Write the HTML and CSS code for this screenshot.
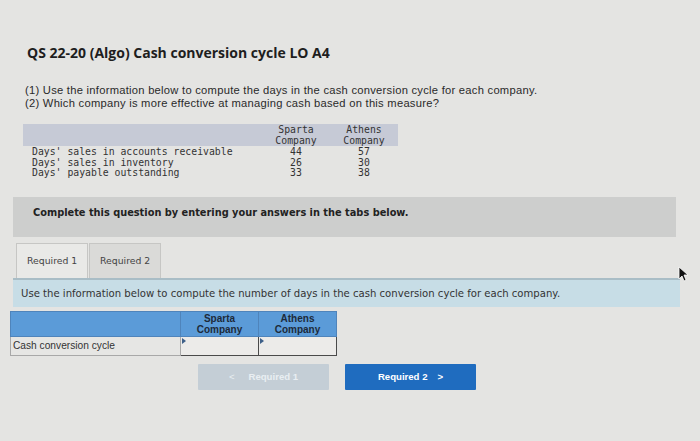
FILE: index.html
```html
<!DOCTYPE html>
<html lang="en">
<head>
<meta charset="utf-8">
<title>QS 22-20 (Algo) Cash conversion cycle LO A4</title>
<link rel="stylesheet" href="styles.css">
</head>
<body>
<div class="page">
  <h1 class="title">QS 22-20 (Algo) Cash conversion cycle LO A4</h1>
  <div class="intro">
    <p>(1) Use the information below to compute the days in the cash conversion cycle for each company.</p>
    <p>(2) Which company is more effective at managing cash based on this measure?</p>
  </div>

  <table class="data">
    <thead>
      <tr>
        <th class="lbl"></th>
        <th>Sparta<br>Company</th>
        <th>Athens<br>Company</th>
      </tr>
    </thead>
    <tbody>
      <tr class="first"><td class="lbl">Days' sales in accounts receivable</td><td>44</td><td>57</td></tr>
      <tr><td class="lbl">Days' sales in inventory</td><td>26</td><td>30</td></tr>
      <tr><td class="lbl">Days' payable outstanding</td><td>33</td><td>38</td></tr>
    </tbody>
  </table>

  <div class="banner">Complete this question by entering your answers in the tabs below.</div>

  <div class="tabs">
    <div class="tab active">Required 1</div>
    <div class="tab">Required 2</div>
  </div>
  <div class="note">Use the information below to compute the number of days in the cash conversion cycle for each company.</div>

  <table class="answer">
    <thead>
      <tr>
        <th class="blank"></th>
        <th>Sparta<br>Company</th>
        <th>Athens<br>Company</th>
      </tr>
    </thead>
    <tbody>
      <tr>
        <td class="rowlbl">Cash conversion cycle</td>
        <td class="inp"><span class="flag"></span></td>
        <td class="inp"><span class="flag"></span></td>
      </tr>
    </tbody>
  </table>

  <div class="nav">
    <button class="btn prev" disabled><span class="chev">&lt;</span>Required 1</button>
    <button class="btn next">Required 2<span class="chev">&gt;</span></button>
  </div>

  <svg class="cursor" width="10" height="16" viewBox="0 0 10 16" aria-hidden="true">
    <path d="M1 1 L1 13 L4 10 L6 15 L8 14 L6 9 L10 9 Z" fill="#111" stroke="#fff" stroke-width="0.8"/>
  </svg>
</div>
</body>
</html>
```

FILE: styles.css
```css
html, body {
  margin: 0;
  padding: 0;
}
body {
  background: #e4e4e2;
  width: 700px;
  height: 441px;
  overflow: hidden;
}
.page {
  position: relative;
  padding-top: 45px;
  height: 396px;
}
.title {
  margin: 0 0 0 27px;
  font-family: "Open Sans", "Liberation Sans", sans-serif;
  font-weight: 700;
  font-size: 14px;
  line-height: 16px;
  color: #1e1e1e;
}
.intro {
  margin: 23px 0 0 25px;
  font-family: "Liberation Sans", Arial, sans-serif;
  font-size: 11.2px;
  line-height: 12.6px;
  letter-spacing: 0.26px;
  color: #2a2a2a;
}
.intro p {
  margin: 0;
}
.data {
  margin: 15px 0 0 23px;
  width: 375px;
  border-collapse: collapse;
  font-family: "DejaVu Sans Mono", "Liberation Mono", monospace;
  font-size: 9.8px;
  color: #333;
}
.data th, .data td {
  padding: 0;
  font-weight: 400;
  text-align: center;
  width: 68px;
}
.data thead tr {
  background: #c6cad6;
}
.data th {
  line-height: 11px;
  height: 22px;
  vertical-align: bottom;
}
.data td {
  line-height: 10.6px;
}
.data tr.first td {
  padding-top: 1px;
}
.data .lbl {
  width: auto;
  text-align: left;
  padding-left: 9px;
}
.banner {
  margin: 18px 0 0 13px;
  width: 643px;
  height: 30px;
  padding: 10px 0 0 20px;
  background: #cdcecd;
  font-family: "DejaVu Sans", Verdana, sans-serif;
  font-weight: 700;
  font-size: 9.8px;
  line-height: 12px;
  color: #222;
}
.tabs {
  display: flex;
  margin: 6px 0 0 16px;
  gap: 1px;
}
.tab {
  width: 72px;
  height: 35px;
  box-sizing: border-box;
  border: 1px solid #c6c6c4;
  border-bottom: none;
  background: #dadad8;
  font-family: "DejaVu Sans", Verdana, sans-serif;
  font-size: 9.3px;
  line-height: 33px;
  color: #444;
  padding-left: 10px;
}
.tab.active {
  background: #e9e9e7;
}
.note {
  margin-left: 13px;
  width: 659px;
  height: 27px;
  padding-left: 8px;
  border-top: 2px solid #a9bdc6;
  background: #c7dde6;
  font-family: "DejaVu Sans", Verdana, sans-serif;
  font-size: 10.1px;
  line-height: 27px;
  color: #333;
}
.answer {
  margin: 4px 0 0 10px;
  border-collapse: collapse;
  font-family: "Liberation Sans", Arial, sans-serif;
  font-size: 10px;
}
.answer th {
  background: #5b9bd8;
  border: 1px solid #4f84bb;
  height: 24px;
  padding: 0;
  width: 77px;
  font-weight: 700;
  line-height: 11px;
  color: #1d2a3a;
  vertical-align: middle;
}
.answer th.blank {
  width: 169px;
}
.answer td {
  height: 18px;
  padding: 0;
}
.answer .rowlbl {
  background: #e6e6e4;
  border: 1px solid #a8a8a8;
  padding-left: 2px;
  color: #333;
  font-size: 10.2px;
}
.answer .inp {
  position: relative;
  background: #ecebe9;
  border: 1.5px solid #4a4a4a;
}
.flag {
  position: absolute;
  left: 1px;
  top: 1px;
  width: 0;
  height: 0;
  border-top: 3px solid transparent;
  border-bottom: 3px solid transparent;
  border-left: 4px solid #3d5f88;
}
.nav {
  display: flex;
  gap: 16px;
  margin: 8px 0 0 198px;
}
.btn {
  width: 131px;
  height: 26px;
  border: none;
  border-radius: 1px;
  font-family: "Liberation Sans", Arial, sans-serif;
  font-weight: 700;
  font-size: 9.6px;
  display: flex;
  align-items: center;
  justify-content: center;
  padding: 0;
}
.btn.prev {
  background: #c4ced6;
  color: #e9eef2;
}
.btn.prev .chev {
  margin-right: 14px;
  font-weight: 400;
}
.btn.next {
  background: #1f6cbf;
  color: #fff;
}
.btn.next .chev {
  margin-left: 10px;
}
.cursor {
  position: absolute;
  left: 678px;
  top: 266px;
}
```
